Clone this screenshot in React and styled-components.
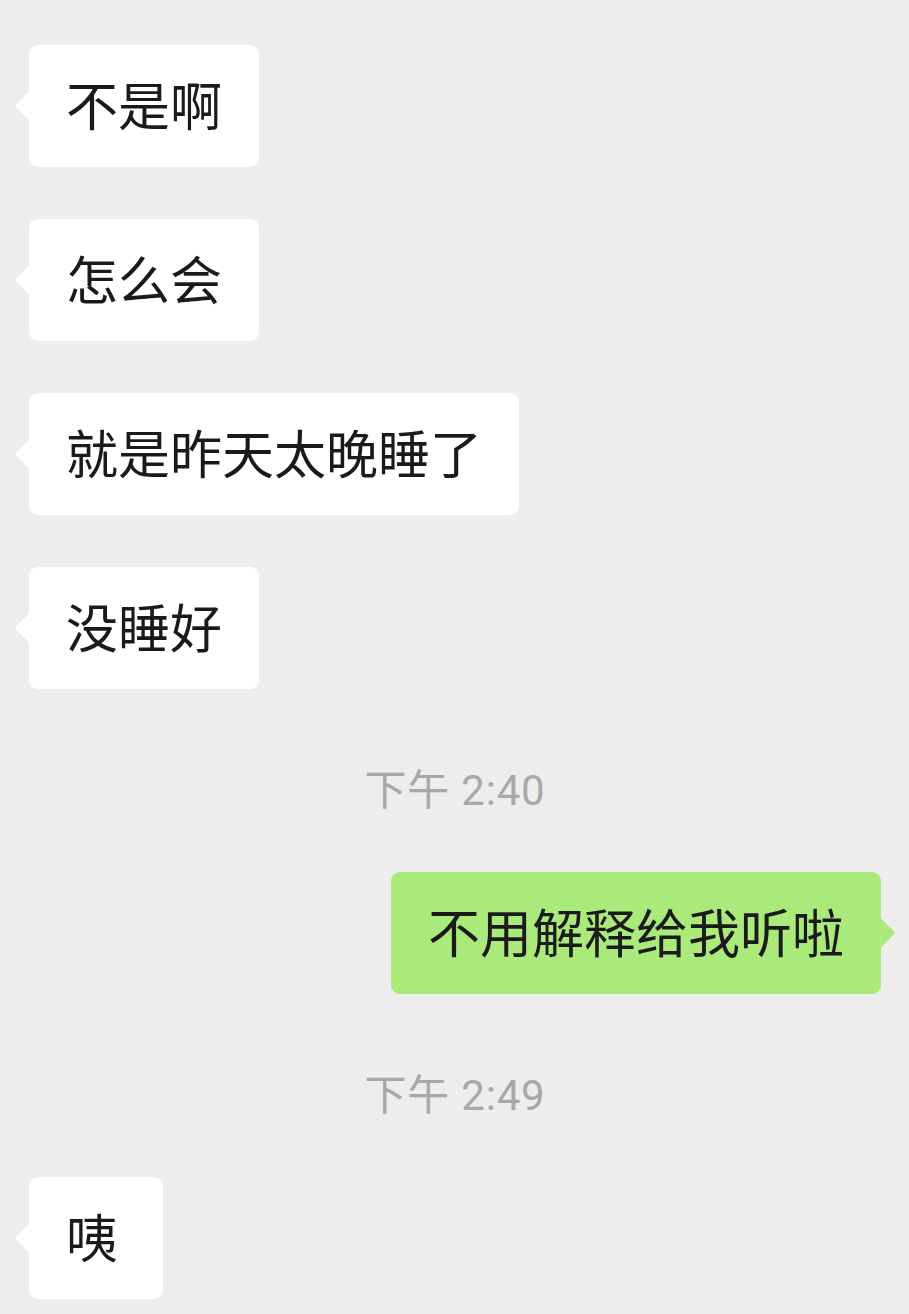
import React from "react";
import styled, { createGlobalStyle, css } from "styled-components";

const GlobalStyle = createGlobalStyle`
  html, body {
    margin: 0;
    padding: 0;
    background: #ededed;
  }
  body {
    font-family: "Noto Sans CJK SC", "Noto Sans", sans-serif;
  }
`;

const Chat = styled.div`
  display: flex;
  flex-direction: column;
  gap: 52px;
  padding: 45px 28px 40px 29px;
  min-height: 1314px;
  box-sizing: border-box;
  background: #ededed;
`;

const Row = styled.div`
  display: flex;
  justify-content: ${(p) => (p.$mine ? "flex-end" : "flex-start")};
`;

const TimeStamp = styled.div`
  margin: 25px 0 4px;
  text-align: center;
  font-family: Roboto, "Noto Sans CJK SC", sans-serif;
  font-size: 42px;
  line-height: 50px;
  color: #a8a8a8;
  letter-spacing: 0.8px;
`;

const Bubble = styled.div`
  position: relative;
  box-sizing: border-box;
  min-width: 134px;
  padding: 33px 37px 37px;
  border-radius: 9px;
  font-size: 52px;
  line-height: 52px;
  color: #1a1a1a;
  white-space: nowrap;
  background: ${(p) => (p.$mine ? "#a9ea7a" : "#ffffff")};

  &::before {
    content: "";
    position: absolute;
    top: 50%;
    width: 22px;
    height: 22px;
    margin-top: -11px;
    border-radius: 3px;
    background: inherit;
    transform: rotate(45deg);
    ${(p) =>
      p.$mine
        ? css`
            right: -10px;
          `
        : css`
            left: -10px;
          `}
  }
`;

const BubbleText = styled.span`
  position: relative;
`;

const items = [
  { type: "msg", text: "不是啊" },
  { type: "msg", text: "怎么会" },
  { type: "msg", text: "就是昨天太晚睡了" },
  { type: "msg", text: "没睡好" },
  { type: "time", text: "下午 2:40" },
  { type: "msg", text: "不用解释给我听啦", mine: true },
  { type: "time", text: "下午 2:49" },
  { type: "msg", text: "咦" },
];

export default function App() {
  return (
    <>
      <GlobalStyle />
      <Chat>
        {items.map((it, i) =>
          it.type === "time" ? (
            <TimeStamp key={i}>{it.text}</TimeStamp>
          ) : (
            <Row key={i} $mine={it.mine}>
              <Bubble $mine={it.mine}>
                <BubbleText>{it.text}</BubbleText>
              </Bubble>
            </Row>
          )
        )}
      </Chat>
    </>
  );
}
